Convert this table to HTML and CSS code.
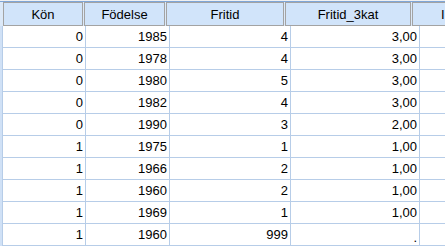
FILE: index.html
```html
<!DOCTYPE html>
<html>
<head>
<meta charset="utf-8">
<link rel="stylesheet" href="styles.css">
</head>
<body>
<div class="view">
  <div class="topline"></div>
  <div class="row head">
    <div class="strip"></div>
    <div class="hc c1">Kön</div>
    <div class="hc c2">Födelse</div>
    <div class="hc c3">Fritid</div>
    <div class="hc c4">Fritid_3kat</div>
    <div class="hc c5 partial">I</div>
  </div>
  <div class="row"><div class="strip"></div><div class="dc c1">0</div><div class="dc c2">1985</div><div class="dc c3">4</div><div class="dc c4">3,00</div><div class="dc c5"></div></div>
  <div class="row"><div class="strip"></div><div class="dc c1">0</div><div class="dc c2">1978</div><div class="dc c3">4</div><div class="dc c4">3,00</div><div class="dc c5"></div></div>
  <div class="row"><div class="strip"></div><div class="dc c1">0</div><div class="dc c2">1980</div><div class="dc c3">5</div><div class="dc c4">3,00</div><div class="dc c5"></div></div>
  <div class="row"><div class="strip"></div><div class="dc c1">0</div><div class="dc c2">1982</div><div class="dc c3">4</div><div class="dc c4">3,00</div><div class="dc c5"></div></div>
  <div class="row"><div class="strip"></div><div class="dc c1">0</div><div class="dc c2">1990</div><div class="dc c3">3</div><div class="dc c4">2,00</div><div class="dc c5"></div></div>
  <div class="row"><div class="strip"></div><div class="dc c1">1</div><div class="dc c2">1975</div><div class="dc c3">1</div><div class="dc c4">1,00</div><div class="dc c5"></div></div>
  <div class="row"><div class="strip"></div><div class="dc c1">1</div><div class="dc c2">1966</div><div class="dc c3">2</div><div class="dc c4">1,00</div><div class="dc c5"></div></div>
  <div class="row"><div class="strip"></div><div class="dc c1">1</div><div class="dc c2">1960</div><div class="dc c3">2</div><div class="dc c4">1,00</div><div class="dc c5"></div></div>
  <div class="row"><div class="strip"></div><div class="dc c1">1</div><div class="dc c2">1969</div><div class="dc c3">1</div><div class="dc c4">1,00</div><div class="dc c5"></div></div>
  <div class="row"><div class="strip"></div><div class="dc c1">1</div><div class="dc c2">1960</div><div class="dc c3">999</div><div class="dc c4 missing">.</div><div class="dc c5"></div></div>
</div>
</body>
</html>
```
FILE: styles.css
```css
html, body {
  margin: 0;
  padding: 0;
  background: #ffffff;
  overflow: hidden;
}
.view {
  width: 445px;
  height: 246px;
  overflow: hidden;
  font-family: "Liberation Sans", Arial, sans-serif;
  font-size: 13px;
  color: #000000;
}
.topline {
  height: 1px;
  background: #f0f0f0;
  border-bottom: 1px solid #7fa6d8;
}
.row {
  display: flex;
  height: 22px;
  white-space: nowrap;
}
.head {
  height: 24px;
  background: #dce9f8;
}
.strip {
  flex: 0 0 2px;
  background: #d0e1f6;
  border-right: 1px solid #b7cde8;
}
.head .strip {
  background: #dce9f8;
  border-right: none;
  flex-basis: 3px;
}
.c1 { flex: 0 0 80px; }
.c2 { flex: 0 0 81px; }
.c3 { flex: 0 0 118px; }
.c4 { flex: 0 0 126px; }
.c5 { flex: 0 0 60px; }
.hc {
  box-sizing: border-box;
  background: #d1e4fa;
  border: 1px solid #a3a3a3;
  margin-right: 1px;
  display: flex;
  align-items: center;
  justify-content: center;
  overflow: hidden;
}
.hc.partial {
  justify-content: flex-start;
  padding-left: 28px;
}
.dc {
  box-sizing: content-box;
  border-right: 1px solid #b7cde8;
  border-bottom: 1px solid #b7cde8;
  height: 21px;
  display: flex;
  align-items: center;
  justify-content: flex-end;
  padding-right: 2px;
}
.missing {
  align-items: flex-end;
}
```
